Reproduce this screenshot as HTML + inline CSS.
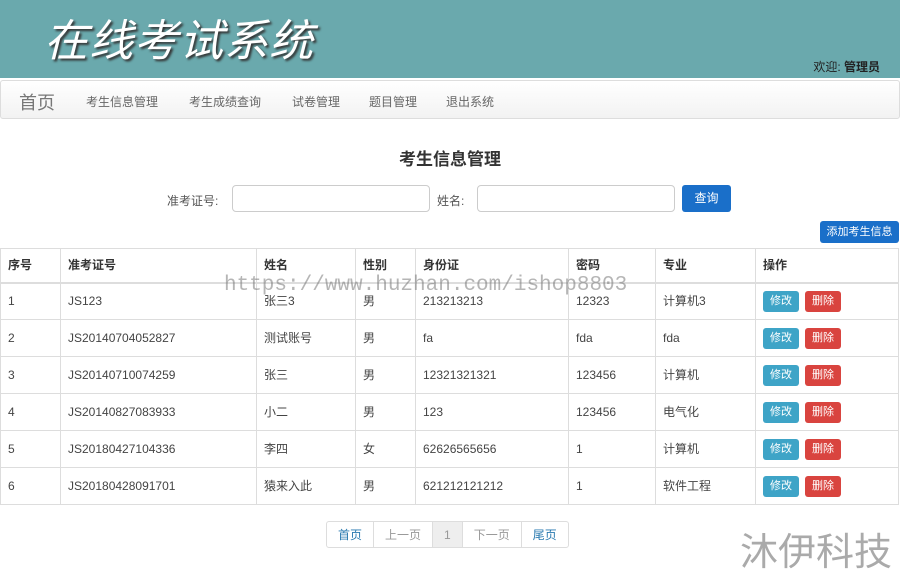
<!DOCTYPE html>
<html><head><meta charset="utf-8"><style>
*{margin:0;padding:0;box-sizing:border-box}
html,body{width:900px;height:569px;overflow:hidden}
body{background:#fff;font-family:"Liberation Sans","Noto Sans CJK SC",sans-serif;color:#333;font-size:12px;position:relative}
.hd{position:absolute;left:0;top:0;width:900px;height:78px;background:#6aa9ad}
.logo{position:absolute;left:44px;top:12px;font-size:44px;line-height:60px;color:#fff;font-style:italic;text-shadow:2px 2px 2px #333;letter-spacing:1px}
.wel{position:absolute;right:20px;top:58px;font-size:12px;color:#222}
.nav{position:absolute;left:0;top:80px;width:900px;height:39px;background:linear-gradient(#fff,#f2f2f2);border:1px solid #ddd;border-radius:3px}
.nav span{position:absolute;top:12px;font-size:12px;color:#666}
.nav .b{font-size:18px;top:8px;color:#777}
h2{position:absolute;top:145px;width:900px;text-align:center;font-size:17px;color:#333}
.lb{position:absolute;top:192px;font-size:12px;color:#555}
.in{position:absolute;top:185px;width:198px;height:27px;border:1px solid #ccc;border-radius:4px}
.btn{position:absolute;color:#fff;border-radius:3px;text-align:center;font-size:12px}
table{position:absolute;left:0;top:248px;width:899px;border-collapse:collapse;border:1px solid #ddd;table-layout:fixed}
td,th{border:1px solid #ddd;text-align:left;padding:0 0 0 7px;height:37px;font-size:12px;font-weight:normal;color:#444;vertical-align:middle;line-height:16px}
th{height:34px;font-weight:bold;color:#333;border-bottom:2px solid #ddd}
.e,.d{display:inline-block;width:36px;height:21px;line-height:21px;text-align:center;color:#fff;border-radius:3px;font-size:11px;vertical-align:middle}
.e{background:#3ea4c7;margin-right:6px}.d{background:#d9443f}
.pg{position:absolute;left:326px;top:521px;height:27px;border:1px solid #ddd;border-radius:3px;display:flex}
.pg span{padding:0 11px;line-height:26px;border-right:1px solid #ddd;color:#999}
.pg span:last-child{border:0}
.wm{position:absolute;left:740px;top:531px;font-size:38px;line-height:44px;color:#aaa}
.url{position:absolute;left:224px;top:274px;font-family:"Liberation Mono",monospace;font-size:21px;color:rgba(120,120,120,.55)}
</style></head><body>
<div class="hd"><div class="logo">在线考试系统</div><div class="wel">欢迎: <b>管理员</b></div></div>
<div class="nav"><span class="b" style="left:18px">首页</span><span style="left:85px">考生信息管理</span><span style="left:188px">考生成绩查询</span><span style="left:291px">试卷管理</span><span style="left:368px">题目管理</span><span style="left:445px">退出系统</span></div>
<h2>考生信息管理</h2>
<div class="lb" style="left:167px">准考证号:</div><div class="in" style="left:232px"></div>
<div class="lb" style="left:437px">姓名:</div><div class="in" style="left:477px"></div>
<div class="btn" style="left:682px;top:185px;width:49px;height:27px;line-height:27px;background:#1a6fc9">查询</div>
<div class="btn" style="left:820px;top:221px;width:79px;height:22px;line-height:22px;background:#1a6fc9;font-size:11px">添加考生信息</div>
<table>
<colgroup><col style="width:60px"><col style="width:196px"><col style="width:99px"><col style="width:60px"><col style="width:153px"><col style="width:87px"><col style="width:100px"><col></colgroup>
<tr><th>序号</th><th>准考证号</th><th>姓名</th><th>性别</th><th>身份证</th><th>密码</th><th>专业</th><th>操作</th></tr>
<tr><td>1</td><td>JS123</td><td>张三3</td><td>男</td><td>213213213</td><td>12323</td><td>计算机3</td><td><span class="e">修改</span><span class="d">删除</span></td></tr>
<tr><td>2</td><td>JS20140704052827</td><td>测试账号</td><td>男</td><td>fa</td><td>fda</td><td>fda</td><td><span class="e">修改</span><span class="d">删除</span></td></tr>
<tr><td>3</td><td>JS20140710074259</td><td>张三</td><td>男</td><td>12321321321</td><td>123456</td><td>计算机</td><td><span class="e">修改</span><span class="d">删除</span></td></tr>
<tr><td>4</td><td>JS20140827083933</td><td>小二</td><td>男</td><td>123</td><td>123456</td><td>电气化</td><td><span class="e">修改</span><span class="d">删除</span></td></tr>
<tr><td>5</td><td>JS20180427104336</td><td>李四</td><td>女</td><td>62626565656</td><td>1</td><td>计算机</td><td><span class="e">修改</span><span class="d">删除</span></td></tr>
<tr><td>6</td><td>JS20180428091701</td><td>猿来入此</td><td>男</td><td>621212121212</td><td>1</td><td>软件工程</td><td><span class="e">修改</span><span class="d">删除</span></td></tr>
</table>
<div class="url">https://www.huzhan.com/ishop8803</div>
<div class="pg"><span style="color:#2a7ab0">首页</span><span>上一页</span><span style="background:#eee">1</span><span>下一页</span><span style="color:#2a7ab0">尾页</span></div>
<div class="wm">沐伊科技</div>
</body></html>
